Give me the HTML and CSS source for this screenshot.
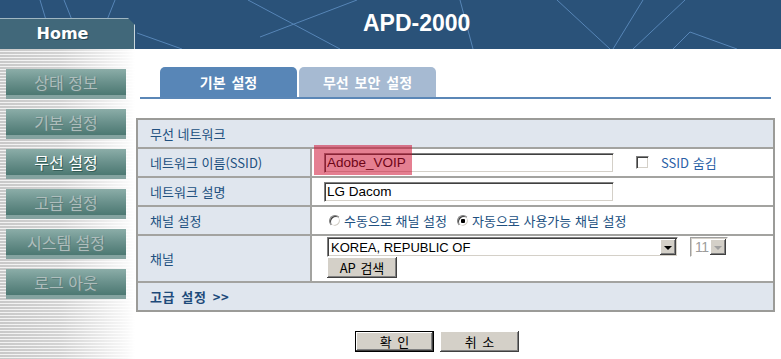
FILE: index.html
```html
<!DOCTYPE html>
<html lang="ko">
<head>
<meta charset="utf-8">
<title>APD-2000</title>
<link rel="stylesheet" href="styles.css">
</head>
<body>
<header class="top">
  <svg class="top-lines" width="781" height="49" viewBox="0 0 781 49" aria-hidden="true">
    <g stroke="#5f8fc2" stroke-width="1" fill="none" opacity="0.85">
      <line x1="40" y1="0" x2="46" y2="20"/>
      <line x1="64" y1="0" x2="72" y2="20"/>
      <line x1="115" y1="0" x2="107" y2="20"/>
      <line x1="137" y1="33" x2="182" y2="49"/>
      <line x1="248" y1="0" x2="340" y2="49"/>
      <line x1="260" y1="37" x2="357" y2="0"/>
      <line x1="460" y1="0" x2="473" y2="49"/>
      <line x1="557" y1="0" x2="610" y2="49"/>
      <line x1="643" y1="0" x2="613" y2="49"/>
      <line x1="685" y1="0" x2="633" y2="49"/>
      <line x1="690" y1="32" x2="737" y2="49"/>
      <line x1="673" y1="49" x2="690" y2="32"/>
    </g>
  </svg>
  <div class="home">Home</div>
  <h1 class="title">APD-2000</h1>
</header>
<div class="page">
  <nav class="side">
    <a class="menu">상태 정보</a>
    <a class="menu">기본 설정</a>
    <a class="menu menu-on">무선 설정</a>
    <a class="menu">고급 설정</a>
    <a class="menu">시스템 설정</a>
    <a class="menu">로그 아웃</a>
  </nav>
  <main class="main">
    <div class="tabs">
      <div class="tab tab-on">기본 설정</div>
      <div class="tab tab-off">무선 보안 설정</div>
    </div>
    <div class="form">
      <div class="cell cell-head">무선 네트워크</div>

      <div class="cell cell-label">네트워크 이름(SSID)</div>
      <div class="cell cell-value">
        <input class="txt" type="text" value="Adobe_VOIP">
        <input class="chk" type="checkbox">
        <span class="chk-text">SSID 숨김</span>
      </div>

      <div class="cell cell-label">네트워크 설명</div>
      <div class="cell cell-value">
        <input class="txt" type="text" value="LG Dacom">
      </div>

      <div class="cell cell-label">채널 설정</div>
      <div class="cell cell-value">
        <input class="radio radio-first" type="radio" name="ch">
        <span class="radio-text">수동으로 채널 설정</span>
        <input class="radio radio-second" type="radio" name="ch" checked>
        <span class="radio-text">자동으로 사용가능 채널 설정</span>
      </div>

      <div class="cell cell-label">채널</div>
      <div class="cell cell-value cell-stack">
        <div class="sel-row">
          <span class="select select-country">
            <select class="sel-native"><option>KOREA, REPUBLIC OF</option></select>
            <span class="sel-arrow"></span>
          </span>
          <span class="select select-channel select-off">
            <span class="sel-value">11</span>
            <span class="sel-arrow"></span>
          </span>
        </div>
        <button class="btn btn-scan" type="button">AP 검색</button>
      </div>

      <div class="cell cell-foot">고급 설정 &gt;&gt;</div>

      <div class="mark"></div>
    </div>
    <div class="actions">
      <button class="btn btn-ok" type="button">확 인</button>
      <button class="btn btn-cancel" type="button">취 소</button>
    </div>
  </main>
</div>
</body>
</html>
```

FILE: styles.css
```css
html, body {
  margin: 0;
  padding: 0;
  background: #ffffff;
}

body {
  width: 781px;
  height: 359px;
  overflow: hidden;
  font-family: "Noto Sans CJK KR", "Noto Sans", sans-serif;
  font-size: 13px;
}

/* ---------- header ---------- */
.top {
  position: relative;
  height: 49px;
  background: #2a5279;
  display: flex;
  align-items: flex-start;
}

.top-lines {
  position: absolute;
  left: 0;
  top: 0;
}

.home {
  position: relative;
  margin-top: 18px;
  width: 135px;
  height: 31px;
  box-sizing: border-box;
  padding-right: 10px;
  background: #41687a;
  clip-path: polygon(0 0, 128px 0, 135px 7px, 135px 100%, 0 100%);
  box-shadow: inset 0 1px 0 #9fb6c2, inset -1px 0 0 #c9d6dc;
  color: #ffffff;
  font: bold 16px "DejaVu Sans", sans-serif;
  display: flex;
  align-items: center;
  justify-content: center;
  text-shadow: 1px 1px 0 #2a4552;
}

.title {
  position: relative;
  margin: 10px 0 0 228px;
  font: bold 23px "Liberation Sans", Arial, sans-serif;
  color: #ffffff;
  line-height: normal;
}

/* ---------- layout ---------- */
.page {
  display: flex;
}

.side {
  flex: none;
  width: 135px;
  height: 310px;
  box-sizing: border-box;
  padding: 20px 0 0 6px;
  display: flex;
  flex-direction: column;
  align-items: flex-start;
  gap: 10px;
  background:
    linear-gradient(to right, rgba(255,255,255,0) 0%, rgba(255,255,255,0.2) 45%, rgba(255,255,255,0.85) 92%, #ffffff 100%),
    repeating-linear-gradient(to bottom, #c9c9c9 0, #c9c9c9 2px, #f2f2f2 2px, #f2f2f2 3px);
}

.menu {
  display: block;
  width: 120px;
  height: 30px;
  box-sizing: border-box;
  padding-bottom: 4px;
  line-height: 26px;
  text-align: center;
  font-size: 16px;
  color: #aebdbc;
  text-shadow: 1px 1px 0 #5c7f7b;
  background: linear-gradient(to bottom, #8badA8 0, #6a918c 13px, #4c7872 26px, #84a3a0 26px, #84a3a0 30px);
}

.menu-on {
  color: #ffffff;
  text-shadow: 1px 1px 0 #355d58;
}

.main {
  flex: 1;
}

/* ---------- tabs ---------- */
.tabs {
  margin: 18px 10px 0 5px;
  padding-left: 20px;
  border-bottom: 2px solid #5b87b7;
  display: flex;
  gap: 2px;
}

.tab {
  width: 137px;
  height: 30px;
  border-radius: 5px 5px 0 0;
  color: #ffffff;
  font-size: 14px;
  font-weight: bold;
  display: flex;
  align-items: center;
  justify-content: center;
  word-spacing: 2px;
}

.tab-on {
  background: #5886b7;
}

.tab-off {
  background: #a6bad2;
}

/* ---------- form grid ---------- */
.form {
  position: relative;
  margin: 19px 0 0 1px;
  width: 639px;
  box-sizing: border-box;
  border: 2px solid #9b9b98;
  background: #a3a3a0;
  display: grid;
  grid-template-columns: 172px 1fr;
  grid-template-rows: 27px 27px 27px 27px 45px 27px;
  gap: 2px;
}

.cell {
  display: flex;
  align-items: center;
  color: #21507f;
  font-size: 13px;
}

.cell-head,
.cell-foot {
  grid-column: 1 / 3;
  background: #e0e6ee;
  padding-left: 12px;
}

.cell-foot {
  font-weight: bold;
  color: #1d4a7a;
  letter-spacing: 0.6px;
  word-spacing: 2px;
}

.cell-label {
  background: #e0e6ee;
  padding-left: 12px;
}

.cell-value {
  background: #ffffff;
  padding-left: 12px;
}

.cell-stack {
  flex-direction: column;
  align-items: flex-start;
  justify-content: flex-start;
  padding-top: 1px;
  padding-left: 15px;
}

/* text input */
.txt {
  width: 290px;
  height: 20px;
  box-sizing: border-box;
  margin: 0;
  padding: 0 2px;
  border: 1px solid;
  border-color: #808080 #ffffff #ffffff #808080;
  box-shadow: inset 1px 1px 0 #404040, inset -1px -1px 0 #d4d0c8;
  font: 13.5px "Liberation Sans", Arial, sans-serif;
  color: #000000;
  background: #ffffff;
  outline: none;
}

/* checkbox */
.chk {
  appearance: none;
  -webkit-appearance: none;
  width: 13px;
  height: 13px;
  margin: 0 0 0 22px;
  border: 1px solid;
  border-color: #808080 #ffffff #ffffff #808080;
  box-shadow: inset 1px 1px 0 #404040, inset -1px -1px 0 #d4d0c8;
  background: #ffffff;
  box-sizing: border-box;
}

.chk-text {
  margin-left: 12px;
  color: #2a60a6;
}

/* radio */
.radio {
  appearance: none;
  -webkit-appearance: none;
  width: 12px;
  height: 12px;
  margin: 0;
  border-radius: 50%;
  box-sizing: border-box;
  border: 1px solid;
  border-color: #808080 #ffffff #ffffff #808080;
  box-shadow: inset 1px 1px 0 #404040, inset -1px -1px 0 #d4d0c8;
  background: #ffffff;
}

.radio:checked {
  background: radial-gradient(circle, #000000 0, #000000 2px, #ffffff 2.5px);
}

.radio-first {
  margin-left: 5px;
}

.radio-second {
  margin-left: 10px;
}

.radio-text {
  margin-left: 3px;
}

/* selects */
.sel-row {
  display: flex;
}

.select {
  display: inline-flex;
  align-items: center;
  height: 20px;
  box-sizing: border-box;
  border: 1px solid;
  border-color: #808080 #ffffff #ffffff #808080;
  box-shadow: inset 1px 1px 0 #404040, inset -1px -1px 0 #d4d0c8;
  background: #ffffff;
  padding: 2px 1px 2px 2px;
}

.select-country {
  width: 351px;
}

.select-channel {
  width: 38px;
  margin-left: 12px;
  border-color: #a0a0a0 #ffffff #ffffff #a0a0a0;
  box-shadow: inset 1px 1px 0 #d4d0c8;
}

.sel-native {
  appearance: none;
  -webkit-appearance: none;
  flex: 1;
  min-width: 0;
  border: 0;
  margin: 0;
  padding: 0 0 0 1px;
  height: 16px;
  background: transparent;
  font: 13px "Liberation Sans", Arial, sans-serif;
  color: #000000;
  outline: none;
}

.sel-value {
  flex: 1;
  padding-left: 2px;
  font: 14px/16px "Liberation Sans", Arial, sans-serif;
  letter-spacing: -0.5px;
  color: #9c9c9c;
}

.sel-arrow {
  flex: none;
  width: 16px;
  height: 16px;
  box-sizing: border-box;
  background: #d4d0c8;
  box-shadow: inset -1px -1px 0 #404040, inset 1px 1px 0 #ffffff, inset -2px -2px 0 #808080;
  display: flex;
  align-items: center;
  justify-content: center;
}

.sel-arrow::after {
  content: "";
  width: 0;
  height: 0;
  border-left: 4px solid transparent;
  border-right: 4px solid transparent;
  border-top: 4px solid #000000;
  margin: 1px 1px 0 0;
}

.select-off .sel-arrow::after {
  border-top-color: #a0a0a0;
}

/* buttons */
.btn {
  margin: 0;
  padding: 0;
  box-sizing: border-box;
  background: #d4d0c8;
  border: 0;
  box-shadow: inset -1px -1px 0 #404040, inset 1px 1px 0 #ffffff, inset -2px -2px 0 #808080;
  font-family: "Noto Sans CJK KR", sans-serif;
  color: #000000;
  display: flex;
  align-items: center;
  justify-content: center;
}

.btn-scan {
  width: 70px;
  height: 21px;
  font-size: 13px;
  word-spacing: 1px;
}

.actions {
  margin-top: 19px;
  padding-left: 220px;
  display: flex;
  gap: 6px;
}

.btn-ok,
.btn-cancel {
  width: 79px;
  height: 21px;
  font-size: 13px;
  word-spacing: 2px;
}

.btn-ok {
  border: 1px solid #000000;
}

/* annotation overlay */
.mark {
  position: absolute;
  left: 176px;
  top: 25px;
  width: 98px;
  height: 30px;
  background: rgba(205, 10, 45, 0.52);
  pointer-events: none;
}
```
